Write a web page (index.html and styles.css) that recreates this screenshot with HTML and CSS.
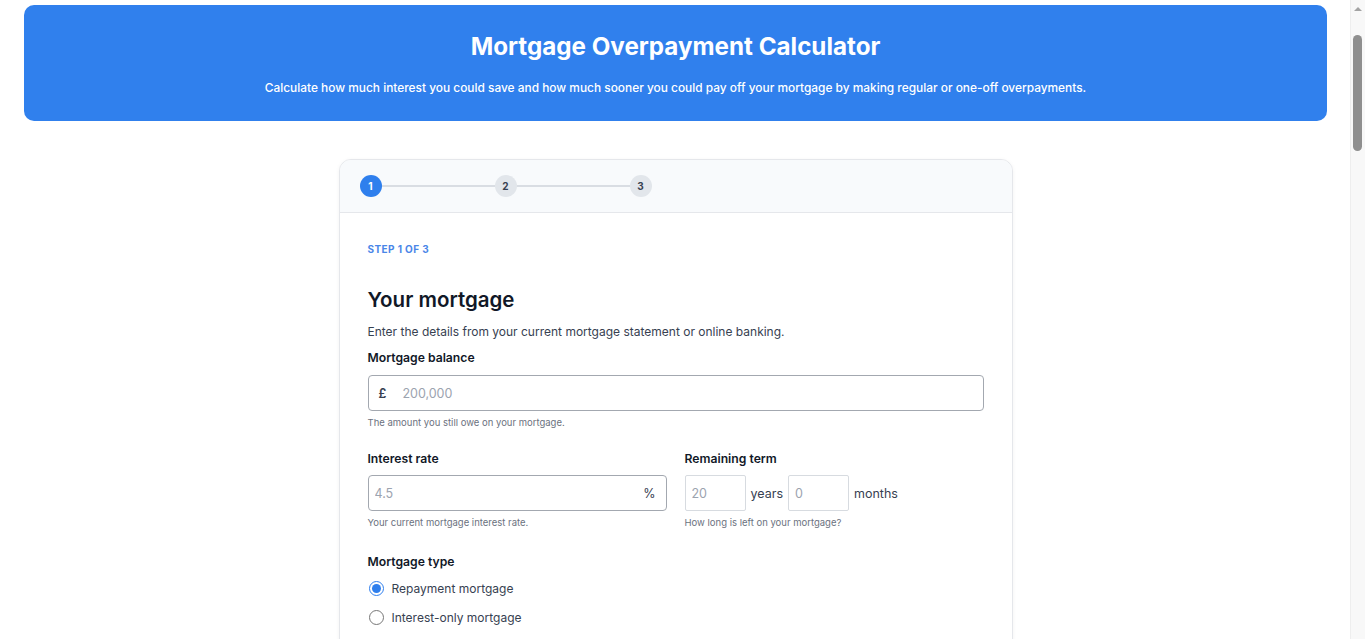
FILE: index.html
```html
<!DOCTYPE html>
<html lang="en">
<head>
<meta charset="utf-8">
<title>Mortgage Overpayment Calculator</title>
<link rel="stylesheet" href="styles.css">
</head>
<body>
<div class="page">
  <header class="hero">
    <h1 class="hero-title">Mortgage Overpayment Calculator</h1>
    <p class="hero-sub">Calculate how much interest you could save and how much sooner you could pay off your mortgage by making regular or one-off overpayments.</p>
  </header>

  <main class="card">
    <div class="stepper">
      <span class="step step-active">1</span>
      <span class="step-line"></span>
      <span class="step">2</span>
      <span class="step-line"></span>
      <span class="step">3</span>
    </div>

    <div class="card-body">
      <div class="eyebrow">STEP 1 OF 3</div>
      <h2 class="section-title">Your mortgage</h2>
      <p class="section-desc">Enter the details from your current mortgage statement or online banking.</p>

      <div class="field balance-field">
        <label class="label">Mortgage balance</label>
        <div class="input-box">
          <span class="prefix">£</span>
          <input class="input" type="text" placeholder="200,000">
        </div>
        <div class="hint">The amount you still owe on your mortgage.</div>
      </div>

      <div class="row">
        <div class="field">
          <label class="label">Interest rate</label>
          <div class="input-box">
            <input class="input input-rate" type="text" placeholder="4.5">
            <span class="suffix">%</span>
          </div>
          <div class="hint">Your current mortgage interest rate.</div>
        </div>
        <div class="field">
          <label class="label">Remaining term</label>
          <div class="term">
            <input class="small-input" type="text" placeholder="20">
            <span class="unit">years</span>
            <input class="small-input" type="text" placeholder="0">
            <span class="unit">months</span>
          </div>
          <div class="hint">How long is left on your mortgage?</div>
        </div>
      </div>

      <div class="field type-field">
        <label class="label">Mortgage type</label>
        <label class="radio-row"><input type="radio" name="type" checked><span>Repayment mortgage</span></label>
        <label class="radio-row"><input type="radio" name="type"><span>Interest-only mortgage</span></label>
      </div>

      <div class="actions">
        <button class="btn" type="button">Next</button>
      </div>
    </div>
  </main>
</div>
<div class="scrollbar" aria-hidden="true">
  <span class="scroll-arrow"></span>
  <span class="scroll-thumb"></span>
</div>
</body>
</html>
```

FILE: styles.css
```css
* { box-sizing: border-box; }

html, body {
  margin: 0;
  padding: 0;
  background: #ffffff;
  font-family: Inter, "Noto Sans", "Liberation Sans", sans-serif;
  color: #111827;
}

.page {
  padding: 5px 38px 60px 24px;
}

/* emulated browser scrollbar */
.scrollbar {
  position: fixed;
  top: 0;
  right: 0;
  width: 15px;
  height: 100vh;
  background: #f8f8f8;
  border-left: 1px solid #eeeeee;
}

.scroll-arrow {
  position: absolute;
  top: 7px;
  left: 3px;
  width: 0;
  height: 0;
  border-left: 4px solid transparent;
  border-right: 4px solid transparent;
  border-bottom: 4px solid #a3a3a3;
}

.scroll-thumb {
  position: absolute;
  top: 35px;
  left: 2px;
  width: 9px;
  height: 116px;
  border-radius: 5px;
  background: #8f8f8f;
}

.hero {
  background: #3080ed;
  border-radius: 10px;
  color: #ffffff;
  text-align: center;
  padding: 27px 24px 26px;
}

.hero-title {
  margin: 0;
  font-size: 24.2px;
  line-height: 29px;
  font-weight: 700;
}

.hero-sub {
  margin: 19px 0 0;
  font-size: 11.9px;
  line-height: 15px;
  font-weight: 500;
}

.card {
  width: 674px;
  margin: 38px auto 0;
  border: 1px solid #e5e7eb;
  border-radius: 12px;
  box-shadow: 0 1px 4px rgba(15, 23, 42, 0.05);
  overflow: hidden;
  background: #ffffff;
}

.stepper {
  display: flex;
  align-items: center;
  padding: 15px 20px;
  background: #f8fafc;
  border-bottom: 1px solid #e5e7eb;
}

.step {
  width: 22px;
  height: 22px;
  border-radius: 50%;
  background: #e2e6eb;
  color: #374151;
  font-size: 10px;
  font-weight: 700;
  display: flex;
  align-items: center;
  justify-content: center;
  flex: none;
}

.step-active {
  background: #2f7fed;
  color: #ffffff;
}

.step-line {
  width: 113px;
  height: 2px;
  background: #d9dde3;
  flex: none;
}

.card-body {
  padding: 30px 28px 40px;
}

.eyebrow {
  font-size: 10px;
  line-height: 12px;
  font-weight: 700;
  color: #4a86e8;
  letter-spacing: 0.4px;
}

.section-title {
  margin: 33px 0 0;
  font-size: 20.5px;
  line-height: 24px;
  font-weight: 600;
  color: #111827;
}

.section-desc {
  margin: 12px 0 0;
  font-size: 12px;
  line-height: 16px;
  color: #374151;
}

.field {
  display: flex;
  flex-direction: column;
}

.balance-field { margin-top: 10px; }

.label {
  font-size: 12.2px;
  line-height: 16px;
  font-weight: 600;
  color: #111827;
}

.input-box {
  margin-top: 9px;
  height: 36px;
  border: 1px solid #a3a8b0;
  border-radius: 4px;
  display: flex;
  align-items: center;
  padding: 0 10px;
}

.prefix {
  font-size: 12.5px;
  font-weight: 600;
  color: #374151;
  margin-right: 16px;
}

.suffix {
  font-size: 12.5px;
  color: #374151;
  margin-left: 8px;
}

.input {
  flex: 1;
  min-width: 0;
  border: none;
  outline: none;
  padding: 0;
  font-family: inherit;
  font-size: 12.5px;
  color: #111827;
  background: transparent;
}

.input-rate { margin-left: -4px; }

.input::placeholder,
.small-input::placeholder {
  color: #9ca3af;
}

.hint {
  margin-top: 6px;
  font-size: 9.5px;
  line-height: 12px;
  color: #6b7280;
}

.row {
  display: grid;
  grid-template-columns: 1fr 1fr;
  column-gap: 18px;
  margin-top: 22px;
}

.row .input-box { margin-top: 8px; }

.term {
  margin-top: 8px;
  display: flex;
  align-items: center;
  height: 36px;
}

.small-input {
  width: 61px;
  height: 36px;
  border: 1px solid #d7dbe0;
  border-radius: 2px;
  padding: 0 6px;
  font-family: inherit;
  font-size: 12.5px;
  outline: none;
  background: #ffffff;
}

.unit {
  font-size: 12.5px;
  color: #374151;
  margin: 0 5px;
}

.type-field {
  margin-top: 25px;
}

.radio-row {
  display: flex;
  align-items: center;
  font-size: 12px;
  color: #374151;
  height: 29px;
}

.type-field .label + .radio-row { margin-top: 4px; }

.radio-row input {
  width: 15px;
  height: 15px;
  margin: 0 8px 0 1px;
  accent-color: #2f7fed;
}

.actions {
  margin-top: 28px;
  display: flex;
  justify-content: flex-end;
}

.btn {
  font-family: inherit;
  font-size: 13px;
  font-weight: 600;
  color: #ffffff;
  background: #2f7fed;
  border: none;
  border-radius: 6px;
  padding: 10px 22px;
}
```
